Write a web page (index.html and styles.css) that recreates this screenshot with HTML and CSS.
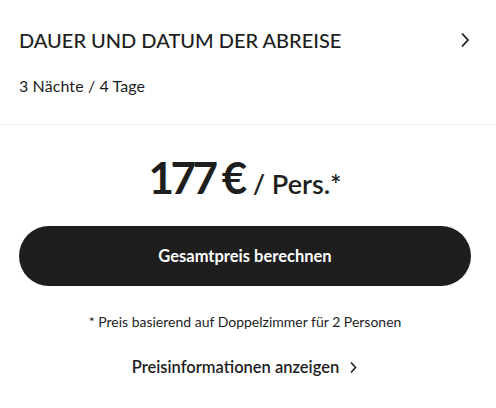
FILE: index.html
```html
<!DOCTYPE html>
<html lang="de">
<head>
<meta charset="utf-8">
<link rel="stylesheet" href="styles.css">
</head>
<body>
<section class="trip">
  <div class="trip-head">
    <h2 class="trip-title">DAUER UND DATUM DER ABREISE</h2>
    <svg class="chev" width="10" height="16" viewBox="0 0 10 16"><path d="M2 1.5 L8 8 L2 14.5" fill="none" stroke="#1e1e1e" stroke-width="1.8"/></svg>
  </div>
  <p class="trip-sub">3 Nächte / 4 Tage</p>
</section>
<section class="price">
  <div class="price-line"><span class="amount">177 €</span><span class="per">/ Pers.*</span></div>
  <button class="cta">Gesamtpreis berechnen</button>
  <p class="note">* Preis basierend auf Doppelzimmer für 2 Personen</p>
  <a class="info">Preisinformationen anzeigen <svg width="9" height="13" viewBox="0 0 9 13"><path d="M2 1.5 L6.5 6.5 L2 11.5" fill="none" stroke="#1e1e1e" stroke-width="1.6"/></svg></a>
</section>
</body>
</html>
```
FILE: styles.css
```css
* { box-sizing: border-box; }
body {
  margin: 0;
  background: #fff;
  color: #1e1e1e;
  font-family: "Lato", "Noto Sans", sans-serif;
}
.trip {
  padding: 28px 26px 0 19px;
  height: 125px;
  border-bottom: 1px solid #f2f2f2;
}
.trip-head {
  display: flex;
  align-items: center;
  justify-content: space-between;
}
.trip-title {
  margin: 0;
  font-size: 20px;
  font-weight: 500;
  line-height: 24px;
  letter-spacing: 0;
}
.trip-sub {
  margin: 24px 0 0;
  font-size: 16px;
  line-height: 20px;
  letter-spacing: 0.1px;
}
.price {
  display: flex;
  flex-direction: column;
  align-items: center;
  padding: 24px 25px 0 19px;
}
.price-line {
  display: flex;
  align-items: baseline;
  gap: 9px;
  height: 56px;
}
.amount {
  font-size: 44px;
  font-weight: 700;
  line-height: 56px;
  letter-spacing: -3.5px;
}
.per {
  font-size: 27px;
  font-weight: 600;
  line-height: 28px;
}
.cta {
  margin-top: 21px;
  width: 100%;
  height: 60px;
  border: 0;
  border-radius: 30px;
  background: #1e1e1e;
  color: #fff;
  font-family: inherit;
  font-size: 16.5px;
  font-weight: 700;
}
.note {
  margin: 27px 0 0;
  font-size: 14px;
  line-height: 17px;
}
.info {
  margin-top: 27px;
  display: flex;
  align-items: center;
  gap: 10px;
  font-size: 16.5px;
  font-weight: 600;
  line-height: 20px;
}
```
